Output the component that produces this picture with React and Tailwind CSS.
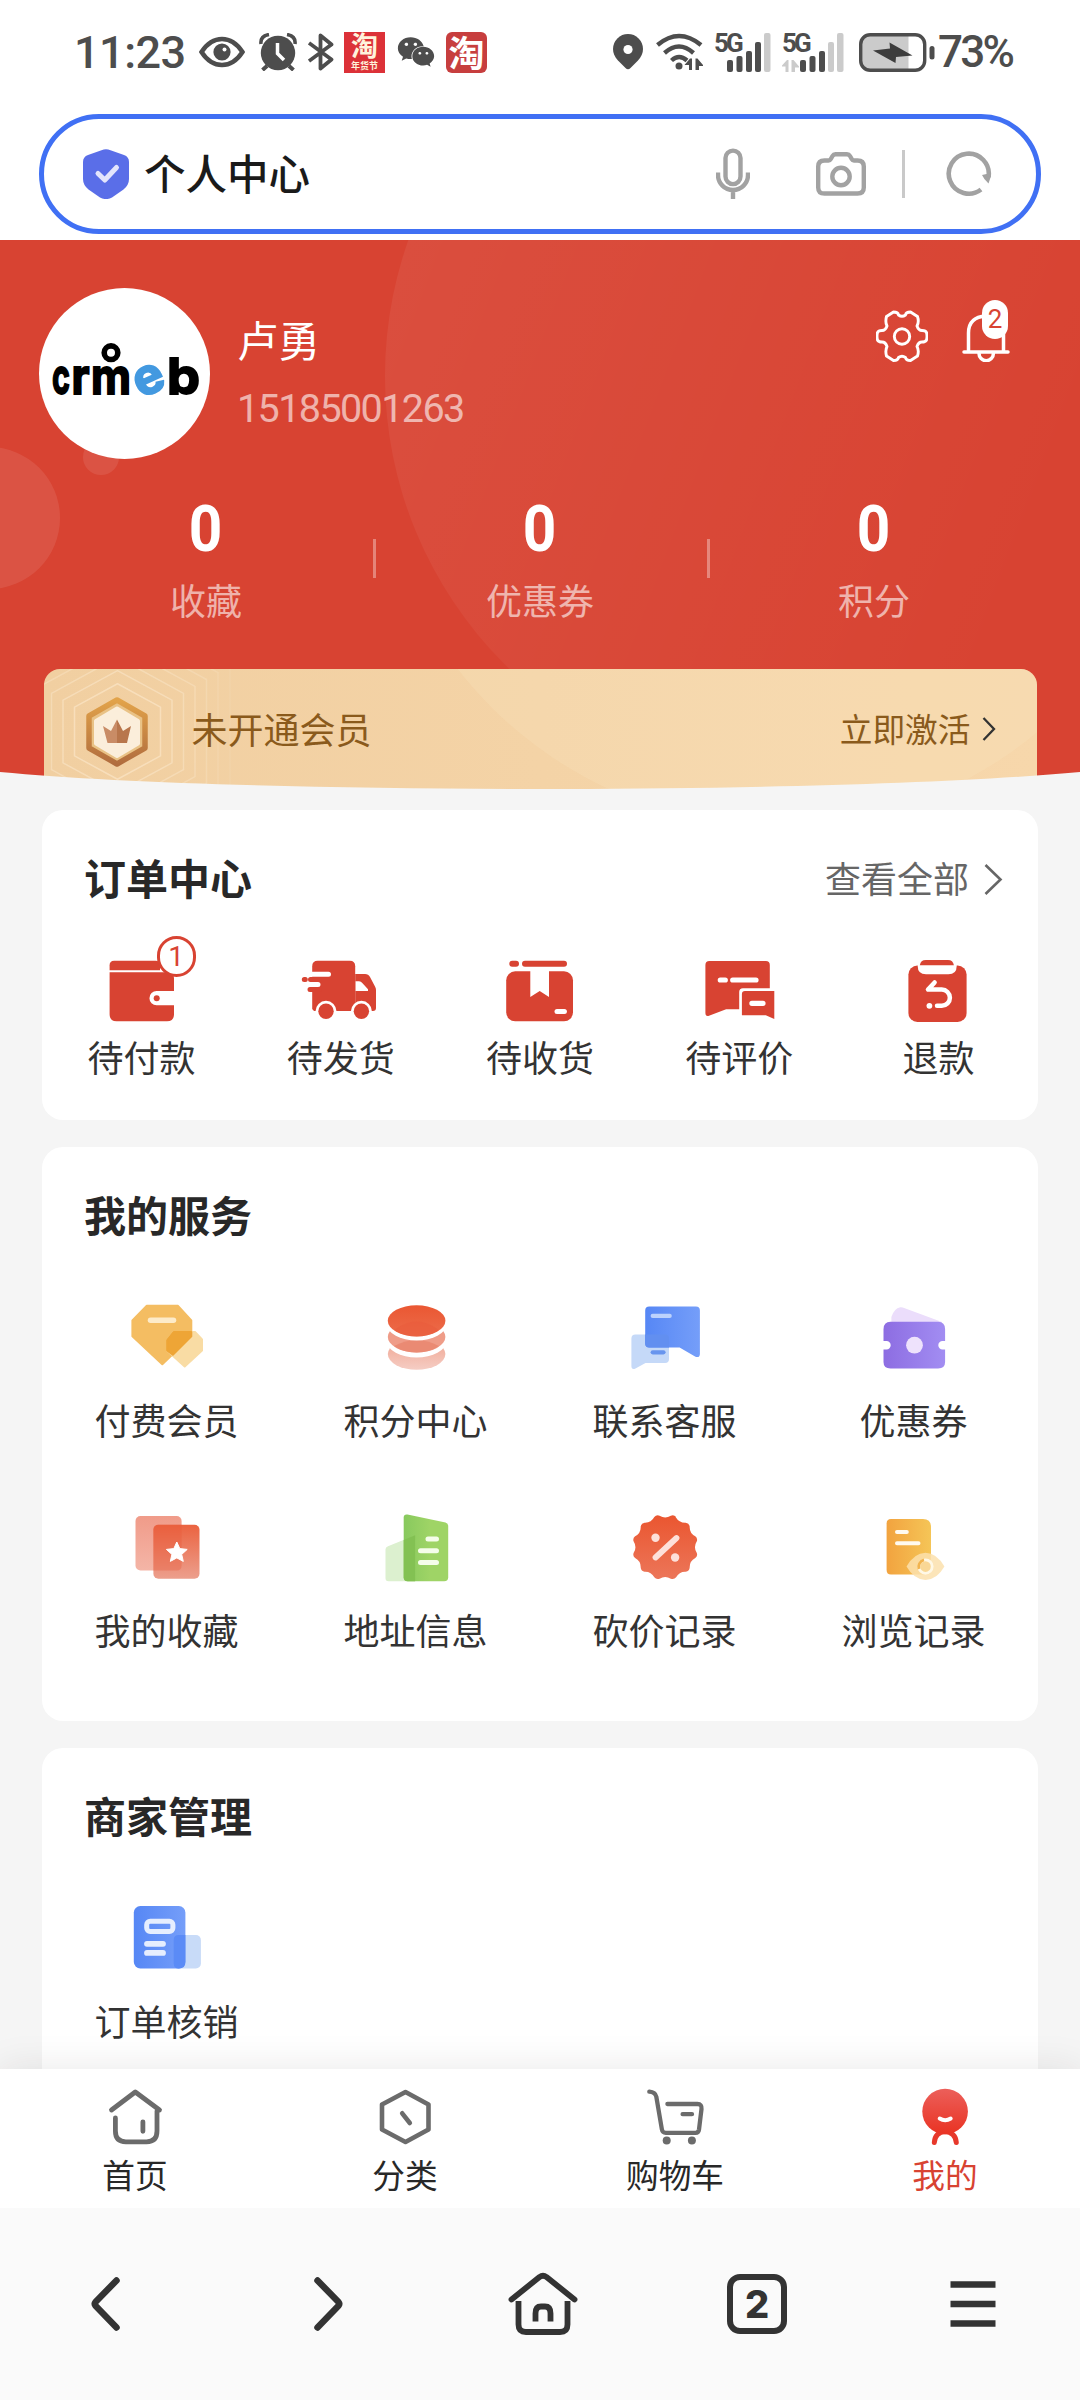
import { FaWeixin } from 'react-icons/fa';

const RED = '#d84332';

const WalletIcon = () => (
  <svg viewBox="0 0 72 72" className="w-[72px] h-[72px] overflow-visible">
    <path d="M3.6 15.3V10.2q0-4.5 4.5-4.5h41.4q4.5 0 4.5 4.5v5.1z" fill={RED} />
    <path d="M3.6 17.3H62q6 0 6 6V36H50.6a7.1 7.1 0 0 0 0 14.3H68v9q0 7-7 7H10.6q-7 0-7-7z" fill={RED} />
    <circle cx="50.7" cy="43.2" r="3" fill={RED} />
  </svg>
);

const TruckIcon = () => (
  <svg viewBox="0 0 72 72" className="w-[72px] h-[72px] overflow-visible">
    <path d="M7.2 54V11.2q0-5.5 5.5-5.5h32q5.5 0 5.5 5.5V56H9z" fill={RED} />
    <path d="M50.2 19H60q3.5 0 5 3l5 9.5q1 1.5 1 3.5V53q0 3-3 3H50.2z" fill={RED} />
    <path d="M50.6 26.3H54q2 0 3.5 2l5.5 6V36H50.6z" fill="#fff" />
    <g strokeLinecap="round" strokeWidth="5">
      <path d="M5 19.3H23.5M5 29.4H13" stroke="#fff" />
      <path d="M5.5 24.4H14M-.7 24.4H.3M5 34.4H14" stroke={RED} />
    </g>
    <circle cx="21" cy="56.3" r="10.5" fill="#fff" />
    <circle cx="56.4" cy="56.3" r="10.5" fill="#fff" />
    <circle cx="21" cy="56.3" r="7.7" fill={RED} />
    <circle cx="56.4" cy="56.3" r="7.7" fill={RED} />
  </svg>
);

const ParcelIcon = () => (
  <svg viewBox="0 0 72 72" className="w-[72px] h-[72px]">
    <path d="M8.3 8.7H12M21 8.7H60" stroke={RED} strokeWidth="6" strokeLinecap="round" />
    <rect x="2.2" y="16.3" width="66.8" height="50" rx="9" fill={RED} />
    <path d="M26.3 16V42l9.4-6 9.3 6V16z" fill="#fff" />
    <path d="M53 56.5H60.4" stroke="#fff" strokeWidth="5" strokeLinecap="round" />
  </svg>
);

const ReviewIcon = () => (
  <svg viewBox="0 0 72 72" className="w-[72px] h-[72px]">
    <path d="M6.4 6H62.8q4 0 4 4V33.3H40q-3.8 0-3.8 3.8V54.3H23.1L6 60.8q-3.6 1-3.6-3V10q0-4 4-4z" fill={RED} />
    <path d="M42 36H71.3V64l-8.5-3.7H38.9V39q0-3 3.1-3z" fill={RED} />
    <path d="M17.3 25H22.3M29.7 25H53M48.9 48.3H60" stroke="#fff" strokeWidth="5.2" strokeLinecap="round" />
  </svg>
);

const RefundIcon = () => (
  <svg viewBox="0 0 72 72" className="w-[72px] h-[72px]">
    <rect x="6.4" y="10.5" width="58.2" height="56.5" rx="9" fill={RED} />
    <path d="M15.7 9.5H54.7V11q0 8.3-8.3 8.3H24q-8.3 0-8.3-8.3z" fill="#fff" />
    <path d="M17.8 10.3q.8-5.3 6-5.3H46q5 0 5.9 5.3z" fill={RED} />
    <path d="M32.6 27.5L26 34.6H39.8a8.1 8.1 0 0 1 0 16.2H35" fill="none" stroke="#fff" strokeWidth="4.5" strokeLinecap="round" strokeLinejoin="round" />
    <circle cx="27.4" cy="50.8" r="2.9" fill="#fff" />
  </svg>
);

const GemIcon = () => (
  <svg viewBox="0 0 72 72" className="w-[72px] h-[72px]">
    <g strokeLinejoin="round" strokeWidth="2">
      <path d="M15.8 5.8H47L60.3 20.5V36.2L31.3 64.3 1.4 36.2V20.5z" fill="#f4bd62" stroke="#f4bd62" />
      <path d="M42.5 32H64L71 39.5V50.4L53.7 66.5 36.1 50.4V40z" fill="#f9dca4" stroke="#f9dca4" />
      <path d="M42.5 32H60.3V36.2L41.8 54.8 36.1 50.4V40z" fill="#eea536" stroke="#eea536" />
    </g>
    <path d="M19.5 20.2H42.5" stroke="#fdebc9" strokeWidth="5.5" strokeLinecap="round" />
  </svg>
);

const CoinsIcon = () => (
  <svg viewBox="0 0 72 72" className="w-[72px] h-[72px]">
    <defs>
      <linearGradient id="coin1" x1="0" y1="0" x2="0" y2="1">
        <stop offset="0" stopColor="#ea5732" />
        <stop offset="1" stopColor="#ec6c4b" />
      </linearGradient>
      <linearGradient id="coin3" x1="0" y1="0" x2="0" y2="1">
        <stop offset=".4" stopColor="#f2b4a4" />
        <stop offset="1" stopColor="#f5cdc4" />
      </linearGradient>
    </defs>
    <ellipse cx="36.6" cy="54.1" rx="28.8" ry="15.6" fill="url(#coin3)" />
    <ellipse cx="36.6" cy="41.8" rx="29.5" ry="15.6" fill="#fff" />
    <ellipse cx="36.6" cy="36.9" rx="28.8" ry="15.6" fill="#ef9c88" />
    <path d="M14 46Q36.6 34 59 46 50 52.5 36.6 52.5T14 46z" fill="#ea8a73" />
    <ellipse cx="36.6" cy="24.8" rx="29.5" ry="15.6" fill="#fff" />
    <ellipse cx="36.6" cy="20.8" rx="28.8" ry="15.6" fill="url(#coin1)" />
    <path d="M14 30Q36.6 13 59 30 50 36.4 36.6 36.4T14 30z" fill="#e95c3c" fillOpacity=".6" />
  </svg>
);

const ChatIcon = () => (
  <svg viewBox="0 0 72 72" className="w-[72px] h-[72px]">
    <defs>
      <linearGradient id="chat">
        <stop offset="0" stopColor="#5687f5" />
        <stop offset="1" stopColor="#759ef9" />
      </linearGradient>
    </defs>
    <path d="M6.4 34.5H36q4 0 4 4V59q0 4-4 4H16.5L6 68.7q-3.6 1-3.6-2.7V38.5q0-4 4-4z" fill="#c5d9f8" />
    <path d="M20.2 6.4H66.9q4 0 4 4V54q0 4-4.4 2.8L50.6 47.5H20.2q-4 0-4-4V10.4q0-4 4-4z" fill="url(#chat)" />
    <path d="M16.2 34.5H36q4 0 4 4V47.5H20.2q-4 0-4-4z" fill="#628ff0" />
    <path d="M23.7 15.9H40.7" stroke="#bcd2fc" strokeWidth="4.2" strokeLinecap="round" />
    <path d="M23.7 52.3H34.5" stroke="#6895ee" strokeWidth="4.2" strokeLinecap="round" />
  </svg>
);

const CouponIcon = () => (
  <svg viewBox="0 0 72 72" className="w-[72px] h-[72px]">
    <defs>
      <linearGradient id="coupon">
        <stop offset="0" stopColor="#8d6de2" />
        <stop offset="1" stopColor="#a28df2" />
      </linearGradient>
    </defs>
    <path d="M13.4 24V17Q16 8.5 22.3 7.2q2-.2 4.5 1L64 22v2z" fill="#ebddfb" />
    <path d="M12.5 21.8H60q7.1 0 7.1 7.5V41H64.5a4.2 4.2 0 0 0 0 8.4H67.1V62q0 6.5-7 6.5H12.5q-7 0-7-6.5V49.4H8.5a4.2 4.2 0 0 0 0-8.4H5.5V29.3q0-7.5 7-7.5z" fill="url(#coupon)" />
    <circle cx="36.5" cy="45.2" r="8.4" fill="#eee2fc" />
  </svg>
);

const FavoriteIcon = () => (
  <svg viewBox="0 0 72 72" className="w-[72px] h-[72px]">
    <defs>
      <linearGradient id="fav1" x1="0" y1="0" x2="0" y2="1">
        <stop offset="0" stopColor="#f09b89" />
        <stop offset="1" stopColor="#f4b5a7" />
      </linearGradient>
      <linearGradient id="fav2" x1="0" y1="0" x2="0" y2="1">
        <stop offset="0" stopColor="#eb6340" />
        <stop offset="1" stopColor="#ec9f8d" />
      </linearGradient>
    </defs>
    <rect x="4.5" y="6" width="46.1" height="54.5" rx="5" fill="url(#fav1)" />
    <rect x="22.4" y="14.7" width="46.1" height="54.1" rx="5" fill="url(#fav2)" />
    <path d="M27 14.7H50.6V55.5q0 5-5 5H22.4V19.5q0-4.8 4.6-4.8z" fill="#e85a38" fillOpacity=".35" />
    <path d="M45.8 32l3 6.6 7.4.8-5.5 5 1.6 7-6.5-3.5-6.5 3.5 1.6-7-5.5-5 7.4-.8z" fill="#fff" stroke="#fff" strokeWidth="1" strokeLinejoin="round" />
  </svg>
);

const AddressIcon = () => (
  <svg viewBox="0 0 72 72" className="w-[72px] h-[72px]">
    <defs>
      <linearGradient id="addr">
        <stop offset="0" stopColor="#88c95e" />
        <stop offset=".6" stopColor="#9fd466" />
      </linearGradient>
    </defs>
    <path d="M8 36.2L35.1 25.3V71.2H8.5q-3 0-3-3V39.2q0-2 2.5-3z" fill="#dcf0cf" />
    <path d="M27.5 4.5L65.5 12.5q2.7.7 2.7 3.5V67.2q0 4-4 4H27.7q-4 0-4-4V7.5q0-3.5 3.8-3z" fill="url(#addr)" />
    <path d="M23.7 30L35.1 25.3V71.2H27.7q-4 0-4-4z" fill="#83c153" />
    <path d="M48 29H56.5M40.5 40.8H56.5M40.5 52.6H56.5" stroke="#f5fdea" strokeWidth="5" strokeLinecap="round" />
  </svg>
);

// 12 rounded bumps around the badge
const scallop = () => {
  const pt = (r, deg) => {
    const t = (deg * Math.PI) / 180;
    return `${(36.2 + r * Math.cos(t)).toFixed(1)} ${(37.2 + r * Math.sin(t)).toFixed(1)}`;
  };
  let d = `M${pt(32, -71)}`;
  for (let i = 0; i < 12; i++) {
    const a = i * 30 - 75;
    d += `Q${pt(28, a + 15)} ${pt(32, a + 25)}Q${pt(34, a + 30)} ${pt(32, a + 35)}`;
  }
  return d + 'z';
};

const BargainIcon = () => (
  <svg viewBox="0 0 72 72" className="w-[72px] h-[72px]">
    <defs>
      <linearGradient id="bargain" x1="0" y1="0" x2="0" y2="1">
        <stop offset="0" stopColor="#ea5630" />
        <stop offset="1" stopColor="#ec7659" />
      </linearGradient>
    </defs>
    <path d={scallop()} fill="url(#bargain)" />
    <path d="M47.5 28L26.5 47.5" stroke="#fde0da" strokeWidth="5.8" strokeLinecap="round" />
    <circle cx="26.5" cy="27.7" r="4.2" fill="#fde0da" />
    <circle cx="46.1" cy="47.5" r="4.2" fill="#fde0da" />
  </svg>
);

const HistoryIcon = () => (
  <svg viewBox="0 0 72 72" className="w-[72px] h-[72px]">
    <defs>
      <linearGradient id="hist">
        <stop offset="0" stopColor="#f2a33f" />
        <stop offset="1" stopColor="#f5c557" />
      </linearGradient>
    </defs>
    <path d="M13 9H45q8 0 8 8V60q0 4.5-4.5 4.5H13q-4.4 0-4.4-4.5V13.5Q8.6 9 13 9z" fill="url(#hist)" />
    <path d="M19 22H28.8M19 33.3H40.5" stroke="#fffaf0" strokeWidth="4" strokeLinecap="round" />
    <path d="M28.5 56.6Q36 43 47.5 42.7 59 43 66.4 56.6 59 69.8 47.5 70 36 69.8 28.5 56.6z" fill="#fbe1ad" fillOpacity=".85" />
    <circle cx="47.5" cy="56.6" r="6.7" fill="#f9d795" stroke="#fff8e6" strokeWidth="2.8" />
    <path d="M46 49.9A7 7 0 0 0 41 59" fill="none" stroke="#f2b44f" strokeWidth="2.8" />
  </svg>
);

const VerifyIcon = () => (
  <svg viewBox="0 0 72 72" className="w-[72px] h-[72px]">
    <rect x="42.7" y="34" width="27.2" height="33.5" rx="5" fill="#c8dbf8" />
    <rect x="2.8" y="5" width="51.6" height="62.5" rx="6.5" fill="url(#chat)" />
    <path d="M47.7 34H54.4V61q0 6.5-6.5 6.5h-.2q-5 0-5-5V39q0-5 5-5z" fill="#5b8bf6" />
    <rect x="15.7" y="20.2" width="26.2" height="10.4" rx="3.5" fill="none" stroke="#e6eefe" strokeWidth="5" />
    <path d="M16 42.8H32M16 51.9H32" stroke="#e6eefe" strokeWidth="5.8" strokeLinecap="round" />
  </svg>
);

const orders = [
  { label: '待付款', icon: WalletIcon, count: 1 },
  { label: '待发货', icon: TruckIcon },
  { label: '待收货', icon: ParcelIcon },
  { label: '待评价', icon: ReviewIcon },
  { label: '退款', icon: RefundIcon },
];

const services = [
  { label: '付费会员', icon: GemIcon },
  { label: '积分中心', icon: CoinsIcon },
  { label: '联系客服', icon: ChatIcon },
  { label: '优惠券', icon: CouponIcon },
  { label: '我的收藏', icon: FavoriteIcon },
  { label: '地址信息', icon: AddressIcon },
  { label: '砍价记录', icon: BargainIcon },
  { label: '浏览记录', icon: HistoryIcon },
];

const merchant = [{ label: '订单核销', icon: VerifyIcon }];

const stats = [
  { label: '收藏', value: 0 },
  { label: '优惠券', value: 0 },
  { label: '积分', value: 0 },
];

const StatusBar = () => (
  <div className="h-[104px] flex items-center pl-[74px] pr-[66px] text-[#4d4d4d] font-['Roboto']">
    <span className="w-[111px] text-[45px] leading-none font-medium tracking-[-0.5px] whitespace-nowrap">11:23</span>
    <svg viewBox="0 0 46 32" className="ml-[14px] w-[46px] h-[32px]">
      <path d="M2.5 16Q11 3 23 3t20.500 13Q35 29 23 29T2.500 16z" fill="none" stroke="currentColor" strokeWidth="4.5" />
      <circle cx="23" cy="16" r="8.6" fill="currentColor" />
      <circle cx="25.5" cy="13.5" r="2" fill="#fff" />
    </svg>
    <svg viewBox="0 0 38 38" className="ml-[14px] w-[38px] h-[38px]">
      <circle cx="19" cy="20" r="17.2" fill="currentColor" />
      <path d="M2 11Q1 3 10 1.5M36 11Q37 3 28 1.5" fill="none" stroke="currentColor" strokeWidth="3.5" />
      <path d="M8 33l-4.5 4M30 33l4.5 4" stroke="currentColor" strokeWidth="4" />
      <path d="M18.5 10v10.5l6.5 6.5" fill="none" stroke="#fff" strokeWidth="3.5" />
    </svg>
    <svg viewBox="0 0 26 38" className="ml-[11px] w-[26px] h-[38px]" fill="none" stroke="currentColor" strokeWidth="3.8" strokeLinejoin="round">
      <path d="M1 10L23.5 26.5 12.5 35.5V2.5L23.5 11.5 1 28" />
    </svg>
    <div className="ml-[10px] w-[41px] h-[41px] bg-[#dc3138] text-[#fff3dc] font-['Noto_Sans_CJK_SC',sans-serif] flex flex-col items-center font-bold">
      <span className="text-[27px] leading-[27px] h-[29px] -mt-[1px]">淘</span>
      <span className="text-[9px] leading-[11px] whitespace-nowrap">年货节</span>
    </div>
    <FaWeixin className="ml-[12px] w-[38px] h-[36px]" />
    <div className="ml-[11px] w-[41px] h-[41px] rounded-[6px] bg-[#c73e3e] text-white font-['Noto_Sans_CJK_SC',sans-serif] flex items-center justify-center">
      <span className="text-[36px] leading-[39px] -mt-[2px] font-bold">淘</span>
    </div>

    <svg viewBox="0 0 30 36" className="ml-auto w-[30px] h-[36px] shrink-0">
      <path d="M15 0a15 15 0 0 1 15 15q0 6-5 11.5L17.5 34q-2.5 2.5-5 0L5 26.5Q0 21 0 15A15 15 0 0 1 15 0z" fill="currentColor" />
      <circle cx="15" cy="15.5" r="4.6" fill="#fff" />
    </svg>
    <svg viewBox="0 0 47 38" className="ml-[13px] w-[47px] h-[38px] shrink-0" fill="none" stroke="currentColor" strokeWidth="4.4">
      <path d="M1.5 12Q23 -6 45 12M8.5 20Q23 7 37.5 20M15.5 27.5Q23 20.5 31 27.5" />
      <circle cx="23" cy="33" r="3.5" fill="currentColor" stroke="none" />
      <path d="M28.500 32l5.500-6.500h2V37h-3V32zM39.500 25.500h2L47 32v1h-4v4h-3.500z" fill="currentColor" stroke="none" />
    </svg>
    <div className="ml-[11px] w-[57px] h-[40px] shrink-0 flex">
      <span className="w-[26px] text-[26px] leading-[36px] -mt-[7px] font-bold tracking-[-3px]">5G</span>
      <svg viewBox="13 0 44 40" className="-ml-[13px] w-[44px] h-[40px] shrink-0" fill="currentColor">
        <rect x="13" y="28" width="6" height="12" rx="2" />
        <rect x="22.5" y="24" width="6" height="16" rx="2" />
        <rect x="32" y="19" width="6" height="21" rx="2" />
        <rect x="41" y="10" width="6" height="30" rx="2" />
        <rect x="50" y="1" width="6.5" height="39" rx="2" fill="#cbcbcb" />
      </svg>
    </div>
    <div className="ml-[11px] w-[62px] h-[40px] shrink-0 flex">
      <span className="w-[26px] text-[26px] leading-[36px] -mt-[7px] font-bold tracking-[-3px]">5G</span>
      <svg viewBox="0 0 62 40" className="-ml-[26px] w-[62px] h-[40px] shrink-0" fill="currentColor">
        <path d="M-1 34.500l6-6.500h1.500V40h-3v-5.500zM9.500 28h2l5.500 6.500v1h-4V40H9.500z" fill="#cbcbcb" />
        <rect x="18" y="28" width="6" height="12" rx="2" />
        <rect x="27.5" y="24" width="6" height="16" rx="2" />
        <rect x="37" y="19" width="6" height="21" rx="2" />
        <rect x="46" y="10" width="6" height="30" rx="2" fill="#cbcbcb" />
        <rect x="55" y="1" width="6.5" height="39" rx="2" fill="#cbcbcb" />
      </svg>
    </div>
    <svg viewBox="0 0 76 39" className="ml-[15px] w-[76px] h-[39px] shrink-0">
      <path d="M2 11q0-9 9-9H49.5V37H11q-9 0-9-9z" fill="#cbcbcb" />
      <rect x="1.7" y="1.7" width="64" height="35.6" rx="9.5" fill="none" stroke="currentColor" strokeWidth="3.4" />
      <path d="M14 17.5L31 15.5 30.5 9.5 53.5 22.5 37 24 36.5 30z" fill="#3d3d3d" />
      <rect x="70.5" y="13" width="5" height="13.5" rx="2.5" fill="currentColor" />
    </svg>
    <span className="ml-[3px] w-[76px] shrink-0 text-[44px] leading-[56px] font-medium tracking-[-2.8px] whitespace-nowrap">73%</span>
  </div>
);

const SearchBar = () => (
  <div className="mx-[39px] mt-[10px] h-[120px] shrink-0 rounded-full border-[5px] border-[#4070f4] bg-white flex items-center pl-[39px] pr-[44px] text-[#a2a2a2]">
    <svg viewBox="0 0 46 50" className="w-[46px] h-[50px]">
      <path d="M18.5 1.2q4.5-1.7 9 0L41 6q5 1.8 5 7V30q0 6-5.5 10.5L29 48.5q-6 3.2-12 0L5.5 40.5Q0 36 0 30V13q0-5.2 5-7z" fill="#5a6ee8" />
      <path d="M15 24.5l6.800 6.500L33.500 18.500" fill="none" stroke="#e3e5fc" strokeWidth="5" strokeLinecap="round" strokeLinejoin="round" />
    </svg>
    <span className="ml-[15px] -mt-[4px] text-[41.5px] leading-[60px] font-medium text-[#1a1a1a]">个人中心</span>
    <svg viewBox="0 0 34 52" className="ml-auto w-[34px] h-[52px]" fill="none" stroke="currentColor" strokeWidth="4.4">
      <rect x="9.5" y="2.6" width="15" height="33.5" rx="7.5" />
      <path d="M2 24.5v2.5a15 15 0 0 0 30 0v-2.5M17 42.5v8.5" />
    </svg>
    <svg viewBox="0 0 50 44" className="ml-[66px] w-[50px] h-[44px]" fill="none" stroke="currentColor" strokeWidth="4.4" strokeLinejoin="round">
      <path d="M8.5 8.5h4q1.5 0 2.3-1.5l1.7-3q1-1.7 3-1.7H31q2 0 3 1.7l1.7 3q.8 1.5 2.3 1.5h3.5q6.3 0 6.3 6V35.5q0 6-6.3 6h-33q-6.3 0-6.3-6V14.5q0-6 6.3-6z" />
      <circle cx="25" cy="24.5" r="8.7" />
    </svg>
    <div className="ml-[36px] w-[3px] h-[48px] bg-[#c9c9c9]" />
    <svg viewBox="0 0 46 46" className="ml-[41px] w-[46px] h-[46px]">
      <path d="M35 38.5A20 20 0 1 1 42.5 26" fill="none" stroke="currentColor" strokeWidth="4.6" />
      <path d="M45 22v3l-2.5 7.5q-4.5-4-6.5-8.5z" fill="currentColor" />
    </svg>
  </div>
);

const Avatar = () => (
  <svg viewBox="0 0 171 171" className="w-[171px] h-[171px] shrink-0 font-['Inter']" fontWeight="700">
    <circle cx="85.5" cy="85.5" r="85.5" fill="#fff" />
    <circle cx="72" cy="64.7" r="6.8" fill="none" stroke="#000" strokeWidth="5.6" />
    <g fontSize="50" stroke="#000" strokeWidth="1.8">
      <text x="13" y="105.5" textLength="18" lengthAdjust="spacingAndGlyphs">c</text>
      <text x="32.5" y="105.5" textLength="18" lengthAdjust="spacingAndGlyphs">r</text>
      <text x="52" y="105.5" textLength="40" lengthAdjust="spacingAndGlyphs">m</text>
      <text x="128" y="105.5" textLength="33" lengthAdjust="spacingAndGlyphs">b</text>
    </g>
    <text x="95" y="105.5" fontSize="50" textLength="30" lengthAdjust="spacingAndGlyphs" fill="#4399e0" stroke="#4399e0" strokeWidth="2" transform="rotate(-24 110 92)">e</text>
  </svg>
);

const hexes = [11.5, 23, 34.5, 46, 57.5, 69, 81];

const VipCard = () => (
  <div className="relative mx-[43.5px] h-[120px] rounded-t-[16px] overflow-hidden bg-linear-to-r from-[#f1cfa1] to-[#f7d7ab] flex items-center pl-[41px] pr-[41px]">
    <svg viewBox="0 0 993 120" className="absolute inset-0 w-[993px] h-[120px]">
      <circle cx="734" cy="-248" r="405" fill="#fbe6c4" fillOpacity=".22" />
      {hexes.map((o) => (
        <path
          key={o}
          d={`M73.5 ${28 - o * 1.15}L${105 + o} ${45 - o * 0.6}V${80 + o * 0.6}L73.5 ${97 + o * 1.15} ${42 - o} ${80 + o * 0.6}V${45 - o * 0.6}z`}
          fill="none"
          stroke="#fae6c8"
          strokeOpacity={0.75 - o * 0.007}
          strokeWidth="1.5"
          strokeLinejoin="round"
        />
      ))}
    </svg>
    <svg viewBox="0 0 64 70" className="relative w-[64px] h-[70px] mt-[5px]">
      <defs>
        <linearGradient id="vip" x1="0" y1="0" x2="0" y2="1">
          <stop offset="0" stopColor="#e2a34a" />
          <stop offset="1" stopColor="#b16d3e" />
        </linearGradient>
      </defs>
      <path d="M32 3L60 19V51L32 67 4 51V19z" fill="#e9c286" stroke="url(#vip)" strokeWidth="5.5" strokeLinejoin="round" />
      <path d="M32 11.5L53 24V46.5L32 59 11 46.5V24z" fill="#fbeedb" stroke="#fbeedb" strokeWidth="4" strokeLinejoin="round" />
      <path d="M18 29l8 5 6-11.5V46H22.5z" fill="#c98c66" />
      <path d="M46 29l-8 5-6-11.5V46H42z" fill="#b8764c" />
    </svg>
    <span className="relative -mt-[3px] ml-[43px] text-[36px] leading-[50px] text-[#8a5a1c]">未开通会员</span>
    <span className="relative -mt-[3px] ml-auto text-[32.7px] leading-[50px] text-[#8a5a1c]">立即激活</span>
    <svg viewBox="0 0 14 26" className="relative ml-[11px] w-[14px] h-[26px]">
      <path d="M1.5 2l10.5 11L1.5 24" fill="none" stroke="#333" strokeWidth="2.3" />
    </svg>
  </div>
);

const Header = () => (
  <div className="relative mt-[6px] h-[549px] shrink-0 bg-[#d84332] overflow-hidden">
    <svg viewBox="0 0 1080 549" className="absolute inset-0 w-[1080px] h-[549px]">
      <defs>
        <linearGradient id="bubble" x1=".05" y1=".3" x2=".85" y2=".6">
          <stop offset="0" stopColor="#fff" stopOpacity=".058" />
          <stop offset="1" stopColor="#fff" stopOpacity="0" />
        </linearGradient>
      </defs>
      <circle cx="792" cy="136" r="407" fill="url(#bubble)" />
      <circle cx="-11" cy="278" r="71" fill="#fff" fillOpacity=".09" />
      <circle cx="101" cy="217" r="18" fill="#fff" fillOpacity=".09" />
    </svg>
    <div className="relative flex pt-[48px] pl-[39px] pr-[70px]">
      <Avatar />
      <div className="ml-[27px] pt-[25px]">
        <div className="text-[41.5px] leading-[52px] text-white">卢勇</div>
        <div className="mt-[18px] text-[39.5px] leading-[52px] tracking-[-1.6px] font-['Roboto'] text-white/60">15185001263</div>
      </div>
      <div className="ml-auto flex pt-[22px]">
        <svg viewBox="0 0 52 52" className="w-[52px] h-[52px]" fill="none" stroke="#fff" strokeWidth="2.9" strokeLinejoin="round">
          <path d="M10.5 6.5L17.5 2q4.5 0 5 3 3.5 2.5 7 0 .5-3 5-3l7 4.5q1.800 5.500-.5 9.500 1.500 4.500 5 4.500 3.800 0 4.500 2 1 3.500 0 7.500-1 2-4.500 2-3.500 0-5 4.500 2.300 4 .5 9.500l-7 4.500q-4.500 0-5-3-3.500-2.500-7 0-.5 3-5 3l-7-4.500q-1.500-5.500.5-9.500-1.500-4.500-5-4.500-3.500 0-4.500-2-1-4 0-7.500.8-2 4.500-2 3.500 0 5-4.500-2-4-.5-9.500z" />
          <circle cx="26" cy="26.5" r="7.7" />
        </svg>
        <div className="relative ml-[34px] w-[48px] h-[52px]">
          <svg viewBox="0 0 48 52" className="w-[48px] h-[52px]" fill="none" stroke="#fff" strokeWidth="3.5" strokeLinecap="round">
            <path d="M6.5 41V23q0-16 17.5-17 17.5 1 17.5 17v18M2 42H46" />
            <path d="M17 43.5a7.2 7.2 0 0 0 14.4 0" />
          </svg>
          <span className="absolute left-[20px] -top-[10px] w-[26px] h-[39px] rounded-full bg-white font-['Roboto'] text-[26px] leading-[38px] text-center text-[#d84332]">2</span>
        </div>
      </div>
    </div>
    <div className="relative mx-[39px] mt-[29px] grid grid-cols-3 h-[181px]">
      {stats.map((s, i) => (
        <div key={s.label} className="relative text-center">
          {i > 0 && <div className="absolute left-0 top-[51px] w-[3px] h-[39px] bg-white/35" />}
          <div className="text-[65px] leading-[82px] font-bold font-['Roboto'] text-white">
            <span className="inline-block scale-x-90">{s.value}</span>
          </div>
          <div className="mt-[4px] text-[36px] leading-[50px] text-white/60">{s.label}</div>
        </div>
      ))}
    </div>
    <VipCard />
    <svg viewBox="0 0 1080 19" className="absolute left-0 bottom-0 w-[1080px] h-[19px]">
      <path d="M0 2C240 24.7 840 24.7 1080 2V20H0z" fill="#f5f5f5" />
    </svg>
  </div>
);

const MenuItem = ({ item }) => {
  const Icon = item.icon;
  return (
    <div className="relative flex flex-col items-center">
      <Icon />
      {item.count && (
        <span className="absolute left-1/2 ml-[15px] -top-[19px] w-[39px] h-[41px] rounded-full border-[3px] border-[#d84332] bg-white font-['Roboto'] text-[28px] leading-[36px] text-center text-[#d84332]">
          {item.count}
        </span>
      )}
      <span className="mt-[4px] text-[36px] leading-[50px] text-[#333]">{item.label}</span>
    </div>
  );
};

const ServiceCard = ({ title, items, className }) => (
  <section className={`mx-[42px] shrink-0 rounded-[21px] bg-white ${className}`}>
    <h2 className="pt-[37px] pl-[42px] text-[42px] leading-[60px] font-bold text-[#282828]">{title}</h2>
    <div className="mt-[56px] grid grid-cols-4">
      {items.map((item) => {
        const Icon = item.icon;
        return (
          <div key={item.label} className="h-[210px] flex flex-col items-center">
            <Icon />
            <span className="mt-[22px] text-[36px] leading-[50px] text-[#333]">{item.label}</span>
          </div>
        );
      })}
    </div>
  </section>
);

const TabBar = () => (
  <nav className="relative h-[139px] shrink-0 bg-white shadow-[0_0_36px_rgba(43,34,34,0.1)] grid grid-cols-4 text-[32.7px] leading-[44px] text-[#282828]">
    <div className="flex flex-col items-center pt-[18px]">
      <svg viewBox="0 0 60 60" className="w-[60px] h-[60px]" fill="none" stroke="#6b6b6b" strokeWidth="4.8" strokeLinecap="round" strokeLinejoin="round">
        <path d="M6.5 23L30.3 5 54.5 23M10.4 31V44q0 10.8 10.5 10.8H41.5Q52 54.8 52 44V24M37.9 34.8V44.3" />
      </svg>
      <span className="mt-[5px]">首页</span>
    </div>
    <div className="flex flex-col items-center pt-[18px]">
      <svg viewBox="0 0 60 60" className="w-[60px] h-[60px]" fill="none" stroke="#6b6b6b" strokeWidth="4.6" strokeLinecap="round" strokeLinejoin="round">
        <path d="M30.5 5L53.5 17.5V42.5L30.5 55 7 42.5V17.5zM27.2 26.3L34.8 36" />
      </svg>
      <span className="mt-[5px]">分类</span>
    </div>
    <div className="flex flex-col items-center pt-[18px]">
      <svg viewBox="0 0 60 60" className="w-[60px] h-[60px]" fill="none" stroke="#6b6b6b" strokeWidth="4.3" strokeLinecap="round" strokeLinejoin="round">
        <path d="M4.3 4.6q6 .5 7 5L16.9 42.5q.6 3.3 4 3.3H50.5q3 0 3.5-3.2L56.5 22q.5-5-4-5H22.4M37.6 27.2H47" />
        <circle cx="21.7" cy="53.6" r="4" fill="#6b6b6b" stroke="none" />
        <circle cx="46.9" cy="53.6" r="4" fill="#6b6b6b" stroke="none" />
      </svg>
      <span className="mt-[5px]">购物车</span>
    </div>
    <div className="flex flex-col items-center pt-[18px] text-[#d84332]">
      <svg viewBox="0 0 60 60" className="w-[60px] h-[60px]">
        <defs>
          <linearGradient id="mine" x1="0" y1="0" x2="0" y2="1">
            <stop offset="0" stopColor="#ec5f5a" />
            <stop offset="1" stopColor="#e93323" />
          </linearGradient>
        </defs>
        <path d="M19.3 55.5Q20 45.5 30 44.5 40.5 45.5 41.3 55.5" fill="none" stroke="#e7382b" strokeWidth="5" strokeLinecap="round" />
        <circle cx="30.1" cy="24.5" r="22.8" fill="url(#mine)" />
        <path d="M24.7 31.5q5.5 3.5 11 0" fill="none" stroke="#fff" strokeWidth="4" strokeLinecap="round" />
      </svg>
      <span className="mt-[5px]">我的</span>
    </div>
  </nav>
);

const BrowserBar = () => (
  <div className="relative h-[192px] shrink-0 bg-[#fafafa] flex items-center pl-[90px] pr-[84px] text-[#333]">
    <svg viewBox="0 0 30 56" className="w-[30px] h-[56px]" fill="none" stroke="currentColor" strokeWidth="6.5" strokeLinecap="round" strokeLinejoin="round">
      <path d="M26.5 4.5L5.5 26q-1.5 1.8 0 3.7L26.5 51.5" />
    </svg>
    <svg viewBox="0 0 30 56" className="ml-[194px] w-[30px] h-[56px]" fill="none" stroke="currentColor" strokeWidth="6.5" strokeLinecap="round" strokeLinejoin="round">
      <path d="M3.5 4.5L24.5 26q1.5 1.8 0 3.7L3.5 51.5" />
    </svg>
    <svg viewBox="0 0 70 64" className="ml-[164px] w-[70px] h-[64px]" fill="none" stroke="currentColor" strokeWidth="5.8" strokeLinecap="round" strokeLinejoin="round">
      <path d="M3.5 27.5L31.5 5q3.5-2.5 7 0L66.5 27.5" />
      <path d="M10.5 29V52.5q0 7.5 7.5 7.5H52q7.5 0 7.5-7.5V29" strokeLinecap="butt" />
      <path d="M27.5 49.5V41.5q0-7 5.5-7h4q5.500 0 5.500 7v8" strokeLinecap="butt" />
    </svg>
    <div className="ml-[149px] w-[60px] h-[60px] rounded-[13px] border-[6px] border-[#333] font-['Inter'] text-[38px] font-extrabold flex items-center justify-center leading-none">2</div>
    <svg viewBox="0 0 46 46" className="ml-auto w-[46px] h-[46px]" stroke="currentColor" strokeWidth="6.5">
      <path d="M.5 3.5H45.5M.5 23H45.5M.5 42.5H45.5" />
    </svg>
  </div>
);

const App = () => {
  return (
    <div className="w-[1080px] h-[2400px] overflow-hidden bg-white flex flex-col font-['Noto_Sans_CJK_SC',sans-serif]">
      <StatusBar />
      <SearchBar />
      <Header />

      <main className="flex-1 min-h-0 overflow-hidden bg-[#f5f5f5] flex flex-col">
        {/* Order center */}
        <section className="mx-[42px] mt-[21px] h-[310px] shrink-0 rounded-[21px] bg-white">
          <div className="flex items-center pt-[37px] pl-[42px] pr-[35px]">
            <h2 className="text-[42px] leading-[60px] font-bold text-[#282828]">订单中心</h2>
            <span className="ml-auto text-[36px] leading-[60px] text-[#666]">查看全部</span>
            <svg viewBox="0 0 19 33" className="ml-[15px] mt-[5px] w-[19px] h-[33px]">
              <path d="M1.5 2l15 14.5L1.5 31" fill="none" stroke="#666" strokeWidth="2.6" />
            </svg>
          </div>
          <div className="mt-[48px] grid grid-cols-5">
            {orders.map((item) => (
              <MenuItem key={item.label} item={item} />
            ))}
          </div>
        </section>

        <ServiceCard title="我的服务" items={services} className="mt-[27px] h-[574px]" />
        <ServiceCard title="商家管理" items={merchant} className="mt-[27px] h-[420px]" />
      </main>

      <TabBar />
      <BrowserBar />
    </div>
  );
};

export default App;
